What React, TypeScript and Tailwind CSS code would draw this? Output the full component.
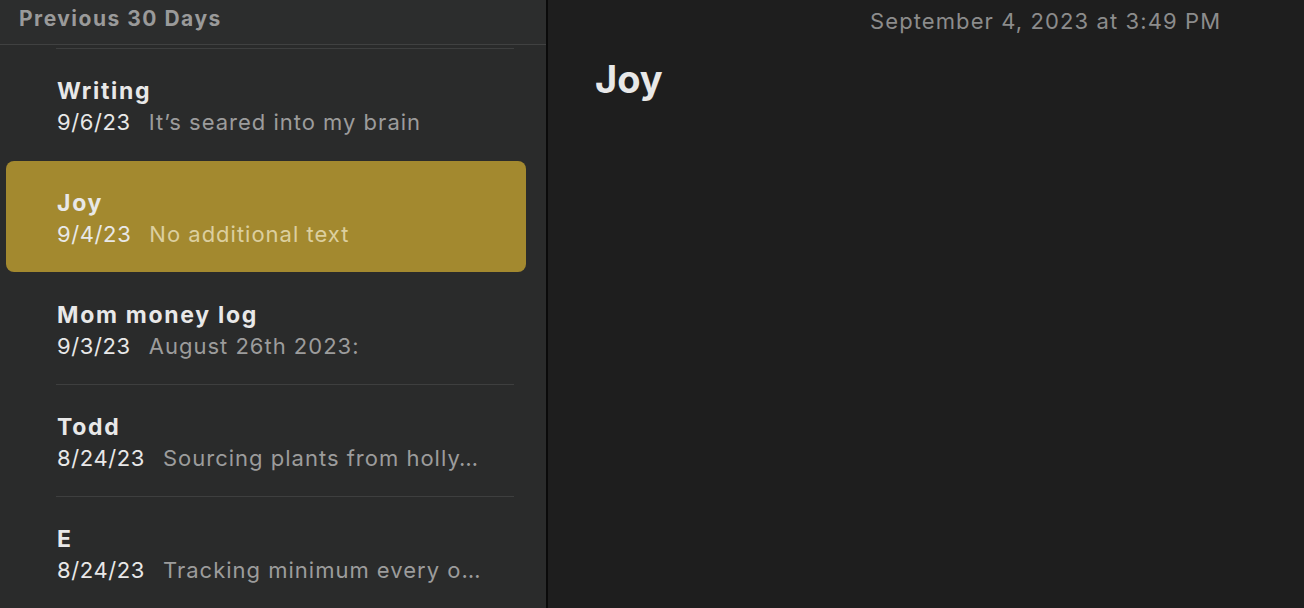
const font = { fontFamily: "Inter, 'Noto Sans', sans-serif" };

type Note = {
  title: string;
  date: string;
  preview: string;
  selected?: boolean;
};

const notes: Note[] = [
  { title: "Writing", date: "9/6/23", preview: "It’s seared into my brain" },
  { title: "Joy", date: "9/4/23", preview: "No additional text", selected: true },
  { title: "Mom money log", date: "9/3/23", preview: "August 26th 2023:" },
  { title: "Todd", date: "8/24/23", preview: "Sourcing plants from holly…" },
  { title: "E", date: "8/24/23", preview: "Tracking minimum every o…" },
];

function NoteRow({ note, hideSep }: { note: Note; hideSep: boolean }) {
  return (
    <div className="flex flex-col">
      <div className="pl-[6px] pr-[20px]">
        <div
          className={
            note.selected
              ? "h-[111px] rounded-lg bg-[#a3892f] pl-[51px] pt-[28px]"
              : "h-[111px] pl-[51px] pt-[28px]"
          }
        >
          <div className="text-[23px] font-bold leading-[28px] tracking-[1.7px] text-[#e8e8e8]">
            {note.title}
          </div>
          <div className="mt-[3px] flex gap-[18px] text-[22px] leading-[28px] whitespace-nowrap">
            <span className="tracking-[0.6px] text-[#e8e8e8]">{note.date}</span>
            <span
              className={
                note.selected
                  ? "tracking-[1px] text-[#dccf9f]"
                  : "tracking-[1px] text-[#9c9c9c]"
              }
            >
              {note.preview}
            </span>
          </div>
        </div>
      </div>
      <div
        className={
          hideSep ? "ml-[56px] mr-[32px] h-px" : "ml-[56px] mr-[32px] h-px bg-[#3e3f3f]"
        }
      />
    </div>
  );
}

export default function App() {
  return (
    <div className="flex h-[608px] w-[1304px] overflow-hidden" style={font}>
      <div className="flex w-[546px] shrink-0 flex-col bg-[#2a2b2b]">
        <div className="flex h-[45px] shrink-0 items-center border-b border-[#404141] bg-[#2c2d2d] pl-[19px]">
          <span className="-mt-[6px] text-[21px] font-bold tracking-[1.5px] text-[#9a9a9a]">
            Previous 30 Days
          </span>
        </div>
        <div className="flex-1 overflow-hidden">
          <div className="mt-[3px] ml-[56px] mr-[32px] h-px bg-[#3e3f3f]" />
          {notes.map((n, i) => (
            <NoteRow
              key={n.title}
              note={n}
              hideSep={n.selected === true || notes[i + 1]?.selected === true}
            />
          ))}
        </div>
      </div>
      <div className="w-[2px] shrink-0 bg-[#0a0a0a]" />
      <div className="flex flex-1 flex-col bg-[#1e1e1e]">
        <div className="pl-[322px] pt-[7px] text-[22px] leading-[28px] tracking-[1.1px] text-[#8c8c8c] whitespace-nowrap">
          September 4, 2023 at 3:49 PM
        </div>
        <div className="pl-[47px] pt-[21px] text-[38px] font-bold leading-[46px] text-[#e8e8e8]">
          Joy
        </div>
      </div>
    </div>
  );
}
